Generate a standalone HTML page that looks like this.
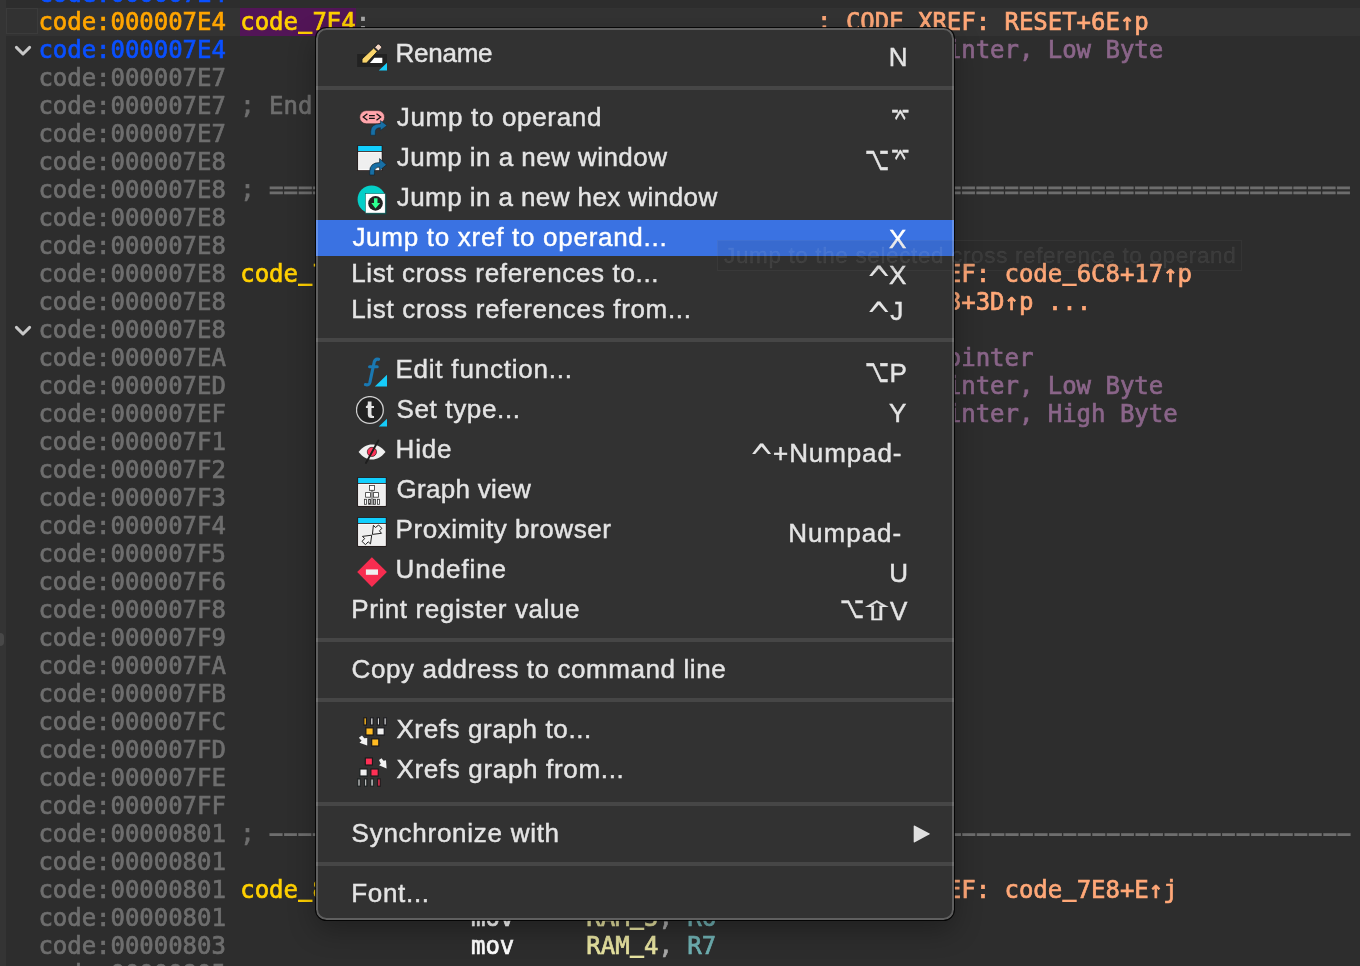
<!DOCTYPE html>
<html lang="en"><head><meta charset="utf-8"><title>IDA View</title>
<style>
html,body{margin:0;padding:0}
body{width:1360px;height:966px;overflow:hidden;background:#2d2d2d;position:relative;font-family:"DejaVu Sans Mono","Liberation Mono",monospace}
i{display:block;font-style:normal}
#view{will-change:transform;position:absolute;left:0;top:0;width:1360px;height:966px;overflow:hidden;font-size:24px;line-height:28px;white-space:pre;letter-spacing:-.03px;-webkit-text-stroke:.7px currentColor}
.strip{position:absolute;left:0;top:0;width:6px;height:966px;background:#343434}
.grip{position:absolute;left:-4px;top:633px;width:8px;height:13px;border-radius:4px;background:#484848}
.ln{position:absolute;left:0;width:1360px;height:28px}
.ln.cur{background:linear-gradient(#333,#333) 6px 0/1354px 28px no-repeat}
.ln span{position:absolute;top:0;height:28px}
.box{position:absolute;left:6px;top:0;width:30px;height:24px;border:1px solid #3b3b3b;background:#323232}
.chev{position:absolute;left:14px;top:9px;width:18px;height:12px;fill:none;stroke:#c8c8c8;stroke-width:3;stroke-linecap:round;stroke-linejoin:round}
.a{color:#6e6e6e}.b{color:#0a50ff}.o{color:#ffa500}
.g{color:#6e6e6e}.lbl{color:#ffd000}.sel{background:#521557}
.x{color:#ffa878}.c{color:#8a6589}.w{color:#fff}.y{color:#e6e2a0}.p{color:#aaa}.r{color:#6fb0b2}.n{color:#7fd27f}
#tip{will-change:transform;position:absolute;left:717px;top:240px;width:525px;height:31px;box-sizing:border-box;border:1px solid rgba(255,255,255,.045);background:rgba(44,44,44,.10);color:rgba(255,255,255,.07);-webkit-text-stroke:.3px currentColor;font:22.5px/40px "Liberation Sans",sans-serif;letter-spacing:0.63px;white-space:nowrap;overflow:hidden}
#tip span{position:absolute;left:6.0px;top:-5.4px}
#menu{will-change:transform;position:absolute;left:316px;top:28px;width:638px;height:892px;box-sizing:border-box;border-radius:10.5px;background:#323232;box-shadow:0 0 0 1px rgba(0,0,0,.85),0 10px 28px rgba(0,0,0,.3);padding:8px 0 0;overflow:hidden;font-family:"Liberation Sans","DejaVu Sans",sans-serif;font-size:25px;color:#e4e4e4;-webkit-text-stroke:.45px currentColor}
#menu:after{content:"";position:absolute;left:0;top:0;right:0;bottom:0;border-radius:10.5px;border:2px solid rgba(255,255,255,.22);pointer-events:none}
.it{position:relative;height:40px;white-space:nowrap}
.it.ni{height:36px}
.it.hl{background:#3a72e2;color:#fff}
.lb{position:absolute;top:-3px;line-height:40px;height:40px;font-size:26px}
.sc{position:absolute;line-height:40px;height:40px;font-size:26px}
.sy{-webkit-text-stroke:.35px currentColor;position:absolute;line-height:0;height:0;transform-origin:0 0;font-family:"DejaVu Sans",sans-serif;white-space:pre}
.arr{position:absolute;left:597px;top:9px;width:18px;height:18px;fill:#e0e0e0}
.sep{height:24px;position:relative}
.sep i{position:absolute;left:0;right:0;top:10px;height:4px;background:#464646}
.ico{position:absolute;left:40px;top:4px;width:32px;height:32px}
.ln b{font-weight:bold;position:relative;top:-2px;-webkit-text-stroke:0}
.ln .dash{top:-1.3px;letter-spacing:-7.510px;transform:scale(2.08,1.4);transform-origin:0 15.4px;-webkit-text-stroke:.15px currentColor}
.sy.th{-webkit-text-stroke:0}

</style></head>
<body>
<div id="view">
<i class="strip"></i><i class="grip"></i>
<div class="ln" style="top:-20px"><span class="b" style="left:38.4px">code:000007E4</span></div>
<div class="ln cur" style="top:8px"><i class="box"></i><span class="o" style="left:38.4px">code:000007E4</span><span class="lbl sel" style="left:240.28px">code<b>_</b>7E4</span><span class="p" style="left:355.64px">:</span><span class="x" style="left:817.08px">; CODE XREF: RESET+6E↑p</span></div>
<div class="ln" style="top:36px"><svg class="chev" viewBox="0 0 18 12"><path d="M2.4 2.4 L9 9 L15.6 2.4"/></svg><span class="b" style="left:38.4px">code:000007E4</span><span class="w" style="left:471.0px">mov</span><span class="y" style="left:586.36px">DPL</span><span class="p" style="left:629.62px">,</span><span class="n" style="left:658.46px">#0</span><span class="c" style="left:817.08px">; Data Pointer, Low Byte</span></div>
<div class="ln" style="top:64px"><span class="a" style="left:38.4px">code:000007E7</span></div>
<div class="ln" style="top:92px"><span class="a" style="left:38.4px">code:000007E7</span><span class="g" style="left:240.28px">; End of function code<b>_</b>7E4</span></div>
<div class="ln" style="top:120px"><span class="a" style="left:38.4px">code:000007E7</span></div>
<div class="ln" style="top:148px"><span class="a" style="left:38.4px">code:000007E8</span></div>
<div class="ln" style="top:176px"><span class="a" style="left:38.4px">code:000007E8</span><span class="g" style="left:240.28px">; ===========================================================================</span></div>
<div class="ln" style="top:204px"><span class="a" style="left:38.4px">code:000007E8</span></div>
<div class="ln" style="top:232px"><span class="a" style="left:38.4px">code:000007E8</span></div>
<div class="ln" style="top:260px"><span class="a" style="left:38.4px">code:000007E8</span><span class="lbl" style="left:240.28px">code<b>_</b>7E8</span><span class="p" style="left:355.64px">:</span><span class="x" style="left:817.08px">; CODE XREF: code<b>_</b>6C8+17↑p</span></div>
<div class="ln" style="top:288px"><span class="a" style="left:38.4px">code:000007E8</span><span class="x" style="left:817.08px">; code<b>_</b>6C8+3D↑p ...</span></div>
<div class="ln" style="top:316px"><svg class="chev" viewBox="0 0 18 12"><path d="M2.4 2.4 L9 9 L15.6 2.4"/></svg><span class="a" style="left:38.4px">code:000007E8</span></div>
<div class="ln" style="top:344px"><span class="a" style="left:38.4px">code:000007EA</span><span class="w" style="left:471.0px">mov</span><span class="y" style="left:586.36px">DPTR</span><span class="p" style="left:644.04px">,</span><span class="n" style="left:672.88px">#word<b>_</b>8000</span><span class="c" style="left:831.5px">; Data Pointer</span></div>
<div class="ln" style="top:372px"><span class="a" style="left:38.4px">code:000007ED</span><span class="w" style="left:471.0px">mov</span><span class="y" style="left:586.36px">A</span><span class="p" style="left:600.78px">,</span><span class="y" style="left:629.62px">DPL</span><span class="c" style="left:817.08px">; Data Pointer, Low Byte</span></div>
<div class="ln" style="top:400px"><span class="a" style="left:38.4px">code:000007EF</span><span class="w" style="left:471.0px">mov</span><span class="y" style="left:586.36px">A</span><span class="p" style="left:600.78px">,</span><span class="y" style="left:629.62px">DPH</span><span class="c" style="left:817.08px">; Data Pointer, High Byte</span></div>
<div class="ln" style="top:428px"><span class="a" style="left:38.4px">code:000007F1</span></div>
<div class="ln" style="top:456px"><span class="a" style="left:38.4px">code:000007F2</span></div>
<div class="ln" style="top:484px"><span class="a" style="left:38.4px">code:000007F3</span></div>
<div class="ln" style="top:512px"><span class="a" style="left:38.4px">code:000007F4</span></div>
<div class="ln" style="top:540px"><span class="a" style="left:38.4px">code:000007F5</span></div>
<div class="ln" style="top:568px"><span class="a" style="left:38.4px">code:000007F6</span></div>
<div class="ln" style="top:596px"><span class="a" style="left:38.4px">code:000007F8</span></div>
<div class="ln" style="top:624px"><span class="a" style="left:38.4px">code:000007F9</span></div>
<div class="ln" style="top:652px"><span class="a" style="left:38.4px">code:000007FA</span></div>
<div class="ln" style="top:680px"><span class="a" style="left:38.4px">code:000007FB</span></div>
<div class="ln" style="top:708px"><span class="a" style="left:38.4px">code:000007FC</span></div>
<div class="ln" style="top:736px"><span class="a" style="left:38.4px">code:000007FD</span></div>
<div class="ln" style="top:764px"><span class="a" style="left:38.4px">code:000007FE</span></div>
<div class="ln" style="top:792px"><span class="a" style="left:38.4px">code:000007FF</span></div>
<div class="ln" style="top:820px"><span class="a" style="left:38.4px">code:00000801</span><span class="g" style="left:240.28px">;</span><span class="g dash" style="left:261.25px">---------------------------------------------------------------------------</span></div>
<div class="ln" style="top:848px"><span class="a" style="left:38.4px">code:00000801</span></div>
<div class="ln" style="top:876px"><span class="a" style="left:38.4px">code:00000801</span><span class="lbl" style="left:240.28px">code<b>_</b>801</span><span class="p" style="left:355.64px">:</span><span class="x" style="left:817.08px">; CODE XREF: code<b>_</b>7E8+E↑j</span></div>
<div class="ln" style="top:904px"><span class="a" style="left:38.4px">code:00000801</span><span class="w" style="left:471.0px">mov</span><span class="y" style="left:586.36px">RAM<b>_</b>5</span><span class="p" style="left:658.46px">,</span><span class="r" style="left:687.3px">R6</span></div>
<div class="ln" style="top:932px"><span class="a" style="left:38.4px">code:00000803</span><span class="w" style="left:471.0px">mov</span><span class="y" style="left:586.36px">RAM<b>_</b>4</span><span class="p" style="left:658.46px">,</span><span class="r" style="left:687.3px">R7</span></div>
<div class="ln" style="top:960px"><span class="a" style="left:38.4px">code:00000805</span></div>
</div>
<div id="menu">
<div class="it ic"><svg class="ico" viewBox="0 0 32 32"><rect x="1.2" y="14" width="29.8" height="13" fill="#222"/><path d="M18.4 17.7H26.3V23.1H13.9Z" fill="#fff"/><path d="M6 19L17.6 8L21.3 11.5L10.6 23.1H6Z" fill="#fad56b" stroke="#1a1a1a" stroke-width=".9" stroke-linejoin="round"/><path d="M18.6 7.2L21.6 4.3Q22.5 3.6 23.3 4.4L25.4 6.5Q26.1 7.4 25.3 8.2L22.4 11Z" fill="#f4d6c4" stroke="#1a1a1a" stroke-width=".9" stroke-linejoin="round"/><path d="M22.8 30.6L31 22.7V30.6Z" fill="#16ccfa"/></svg><span class="lb" style="left:79.6px;letter-spacing:-0.28px">Rename</span><span class="sc" style="left:572.7px;top:1px">N</span></div>
<div class="sep"><i></i></div>
<div class="it ic"><svg class="ico" viewBox="0 0 32 32"><rect x="3.7" y="6.6" width="24.9" height="13.2" rx="6.6" fill="#ffa5ab" stroke="#2a2020" stroke-width=".6"/><path d="M11.4 9.7L7.2 13L11.4 16.3M20.5 9.7L24.7 13L20.5 16.3M13 11.7H18.8M13 14.4H18.8" fill="none" stroke="#151515" stroke-width="1.3"/><path d="M14.7 31.2V27.5Q14.7 19.8 24.4 19.8V16.5L31 21.5L24.4 26.4V23.7Q19.3 23.7 19.3 28V31.2Z" fill="#176fa6" stroke="#14242e" stroke-width=".5"/></svg><span class="lb" style="left:80.8px;letter-spacing:0.68px">Jump to operand</span><span class="sy" style="left:575.0px;top:17.0px;font-size:21.0px;transform:scale(0.77,1.31)">⌤</span></div>
<div class="it ic"><svg class="ico" viewBox="0 0 32 32"><rect x="1.5" y="1.3" width="24.8" height="25.6" fill="#1c1010"/><rect x="2.1" y="1.9" width="23.6" height="5.1" fill="#12d0ff"/><rect x="2.1" y="7.8" width="23.6" height="18.4" fill="#fff"/><rect x="3" y="8.6" width="21.8" height="16.7" fill="#efefef"/><path d="M13.7 31V27.5Q13.7 18.6 23.6 18.6V14.6L30.5 20.8L23.6 26.6V23.1Q18.4 23.1 18.4 28.5V31Z" fill="#176fa6" stroke="#14242e" stroke-width=".7"/></svg><span class="lb" style="left:80.8px;letter-spacing:0.45px">Jump in a new window</span><span class="sy" style="left:549.1px;top:18.5px;font-size:26.4px;transform:scale(0.80,1.25)">⌥</span><span class="sy" style="left:575.0px;top:17.0px;font-size:21.0px;transform:scale(0.77,1.31)">⌤</span></div>
<div class="it ic"><svg class="ico" viewBox="0 0 32 32"><circle cx="15.6" cy="15.4" r="14" fill="#04cfc8"/><rect x="10.4" y="10.6" width="20" height="19.8" fill="#0c4a48"/><rect x="9.5" y="9.7" width="19.7" height="19.4" fill="#fff" stroke="#0c5a58" stroke-width=".5"/><circle cx="19.5" cy="19.4" r="7.3" fill="#222"/><path d="M18 14.2H21.5V19H24.2L19.5 24.6L15.3 19H18Z" fill="#2dff8f"/></svg><span class="lb" style="left:80.8px;letter-spacing:0.42px">Jump in a new hex window</span></div>
<div class="it ni hl"><span class="lb" style="left:36.4px;letter-spacing:0.72px">Jump to xref to operand...</span><span class="sc" style="left:573.1px;top:-1px">X</span></div>
<div class="it ni"><span class="lb" style="left:35.2px;letter-spacing:0.65px">List cross references to...</span><span class="sy th" style="left:549.6px;top:23.7px;font-size:34.3px;transform:scale(0.89,1.13)">^</span><span class="sc" style="left:573.1px;top:-1px">X</span></div>
<div class="it ni"><span class="lb" style="left:35.2px;letter-spacing:0.68px">List cross references from...</span><span class="sy th" style="left:549.6px;top:23.7px;font-size:34.3px;transform:scale(0.89,1.13)">^</span><span class="sc" style="left:574.3px;top:-1px">J</span></div>
<div class="sep"><i></i></div>
<div class="it ic"><svg class="ico" viewBox="0 0 32 32"><path d="M22.6 3.3Q19.6 2.2 18.3 5.6L13.9 26.3Q13 29.6 9.4 28.6M13.6 10.7H21.2" fill="none" stroke="#1a78b2" stroke-width="3.1" stroke-linecap="round"/><path d="M18.8 30.6L31 18.8V30.6Z" fill="#16ccfa"/></svg><span class="lb" style="left:79.4px;letter-spacing:0.79px">Edit function...</span><span class="sy" style="left:549.2px;top:18.6px;font-size:26.1px;transform:scale(0.80,1.25)">⌥</span><span class="sc" style="left:573.5px;top:1px">P</span></div>
<div class="it ic"><svg class="ico" viewBox="0 0 32 32"><circle cx="13.9" cy="14" r="13.4" fill="#222" stroke="#cfcfcf" stroke-width="1.3"/><path d="M11.8 5.4H15.5V9.9H18V11.9H15.5V18.3Q15.5 20 17.1 20H18V22.1H15.3Q11.8 22.1 11.8 18.6V11.9H9.9V10.2Q11.8 9.9 11.8 8Z" fill="#e2e2e2"/><path d="M22.8 30.6L31 22.7V30.6Z" fill="#16ccfa"/></svg><span class="lb" style="left:80.4px;letter-spacing:0.66px">Set type...</span><span class="sc" style="left:573.0px;top:1px">Y</span></div>
<div class="it ic"><svg class="ico" viewBox="0 0 32 32"><path d="M2.6 15.9C7 10.5 11 8.5 16 8.5C21 8.5 25 10.5 29.5 15.9C25 21.3 21 23.4 16 23.4C11 23.4 7 21.3 2.6 15.9Z" fill="#f0f0f0"/><circle cx="15.9" cy="15.9" r="4.6" fill="#ff3358" stroke="#2a1a1a" stroke-width=".7"/><path d="M22.4 4.5L9.9 27" stroke="#1e1e1e" stroke-width="1.9" stroke-linecap="round"/></svg><span class="lb" style="left:79.6px;letter-spacing:0.77px">Hide</span><span class="sy th" style="left:432.8px;top:25.7px;font-size:34.2px;transform:scale(0.88,1.13)">^</span><span class="sc" style="left:457.1px;top:1px;letter-spacing:0.89px">+Numpad-</span></div>
<div class="it ic"><svg class="ico" viewBox="0 0 32 32"><rect x="1.5" y="1.3" width="28.9" height="29.3" fill="#1c1010"/><rect x="2.1" y="1.9" width="27.7" height="5.1" fill="#12d0ff"/><rect x="2.1" y="7.8" width="27.7" height="22.1" fill="#fff"/><rect x="3" y="8.6" width="25.9" height="20.4" fill="#efefef"/><rect x="14.9" y="14" width="2.3" height="15" fill="#9a9a9a"/><g fill="#fff" stroke="#333" stroke-width=".8"><rect x="13.5" y="9.5" width="4.9" height="4.8"/><rect x="9.6" y="16.6" width="4.9" height="4.6"/><rect x="17.5" y="16.6" width="4.9" height="4.6"/><rect x="8.5" y="23.3" width="1.9" height="5"/><rect x="12.6" y="23.3" width="1.9" height="5" fill="#bbb"/><rect x="17.5" y="23.3" width="1.9" height="5" fill="#bbb"/><rect x="21.5" y="23.3" width="1.9" height="5"/></g></svg><span class="lb" style="left:80.4px;letter-spacing:0.31px">Graph view</span></div>
<div class="it ic"><svg class="ico" viewBox="0 0 32 32"><rect x="1.5" y="1.3" width="28.9" height="29.3" fill="#1c1010"/><rect x="2.1" y="1.9" width="27.7" height="5.1" fill="#12d0ff"/><rect x="2.1" y="7.8" width="27.7" height="22.1" fill="#fff"/><rect x="3" y="8.6" width="25.9" height="20.4" fill="#efefef"/><g fill="#f4f4f4" stroke="#222" stroke-width="1" stroke-linejoin="miter"><path d="M16.4 18.4L17.4 9.3L19.5 11.5L22.6 9L25.9 12.4L23.4 14.8L25.5 17.3Z"/><path d="M15.7 19.2L6.4 20.4L8.7 22.5L6 25.4L9.5 28.7L12.2 25.8L14.5 27.9Z"/></g></svg><span class="lb" style="left:79.6px;letter-spacing:0.54px">Proximity browser</span><span class="sc" style="left:472.3px;top:1px;letter-spacing:1.00px">Numpad-</span></div>
<div class="it ic"><svg class="ico" viewBox="0 0 32 32"><path d="M1.2 16.1L15.9 1.2L30.9 16.1L15.9 31Z" fill="#f72d50"/><rect x="9.9" y="13.4" width="12.1" height="5.4" fill="#efefef"/></svg><span class="lb" style="left:79.6px;letter-spacing:0.91px">Undefine</span><span class="sc" style="left:573.2px;top:1px">U</span></div>
<div class="it ni"><span class="lb" style="left:35.2px;letter-spacing:0.61px">Print register value</span><span class="sy" style="left:524.2px;top:16.0px;font-size:25.3px;transform:scale(0.83,1.21)">⌥</span><span class="sy" style="left:542.4px;top:18.8px;font-size:34.2px;transform:scale(1.31,0.76)">⇧</span><span class="sc" style="left:574.0px;top:-1px">V</span></div>
<div class="sep"><i></i></div>
<div class="it ni"><span class="lb" style="left:35.6px;letter-spacing:0.58px">Copy address to command line</span></div>
<div class="sep"><i></i></div>
<div class="it ic"><svg class="ico" viewBox="0 0 32 32"><g stroke="#15151a" stroke-width="1.1"><rect x="7.9" y="1.8" width="2.5" height="7.2" fill="#ffbb22"/><rect x="14.7" y="1.8" width="2.3" height="7.2" fill="#f0f0f0"/><rect x="21.3" y="1.8" width="2.1" height="7.2" fill="#f0f0f0"/><rect x="28" y="1.8" width="2.2" height="7.2" fill="#f0f0f0"/><rect x="9.9" y="11.9" width="7.3" height="7.1" fill="#ffbb22"/><rect x="20.9" y="11.9" width="7.3" height="7.1" fill="#f0f0f0"/><rect x="15.7" y="22.9" width="7.1" height="7.1" fill="#ffbb22"/></g><path d="M2.9 21.7L6 19.6L8.3 22.3L11.2 22V29.5L3.5 26.8L5.6 24.8Z" fill="#f2f2f2"/></svg><span class="lb" style="left:80.4px;letter-spacing:0.62px">Xrefs graph to...</span></div>
<div class="it ic"><svg class="ico" viewBox="0 0 32 32"><g stroke="#151a1a" stroke-width="1.1"><rect x="9.3" y="2" width="7.1" height="7" fill="#ff3055"/><rect x="3.9" y="13" width="7.3" height="7" fill="#f0f0f0"/><rect x="14.9" y="13" width="7.3" height="7" fill="#ff3055"/><rect x="1.9" y="22.9" width="2.2" height="7.3" fill="#f0f0f0"/><rect x="8.7" y="22.9" width="2.1" height="7.3" fill="#f0f0f0"/><rect x="14.9" y="22.9" width="2.3" height="7.3" fill="#f0f0f0"/><rect x="21.7" y="22.9" width="2.5" height="7.3" fill="#ff3055"/></g><path d="M23 3.9L25.5 2.2L27.5 4.7L30 4.3L30.6 12.6L23 9.3L24.8 7.8Z" fill="#f2f2f2"/></svg><span class="lb" style="left:80.4px;letter-spacing:0.67px">Xrefs graph from...</span></div>
<div class="sep"><i></i></div>
<div class="it ni"><span class="lb" style="left:35.6px;letter-spacing:0.73px">Synchronize with</span><svg class="arr" viewBox="0 0 18 18"><path d="M0.7 0.9Q0.7 0.2 1.4 0.5L16.6 8.4Q17.3 8.8 16.6 9.2L1.4 17.4Q0.7 17.7 0.7 17Z"/></svg></div>
<div class="sep"><i></i></div>
<div class="it ni"><span class="lb" style="left:35.2px;letter-spacing:0.7px">Font...</span></div>
</div>
<div id="tip"><span>Jump to the selected cross reference to operand</span></div>
</body></html>
